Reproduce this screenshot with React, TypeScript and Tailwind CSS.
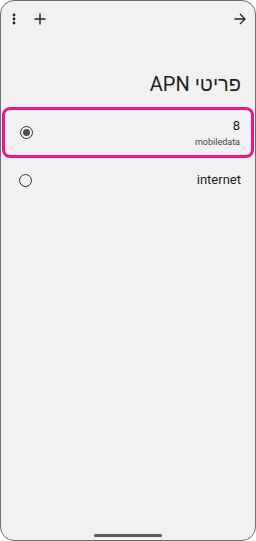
import React from "react";

const Radio = ({ checked }: { checked?: boolean }) => (
  <span className="flex h-[13px] w-[13px] items-center justify-center rounded-full border-[1.5px] border-[#303030]">
    {checked && <span className="h-[7px] w-[7px] rounded-full bg-[#505050]" />}
  </span>
);

export default function App() {
  return (
    <div className="h-[541px] w-[256px] bg-white font-['Roboto',sans-serif]">
      <div className="relative flex h-full w-full flex-col overflow-hidden rounded-[14px] border border-[#6b6f73] bg-[#f1f1f1]">
        {/* top bar */}
        <div className="flex h-[34px] items-center justify-between pl-[8px] pr-[9px] pt-[1px]">
          <div className="flex items-center gap-[15px]">
            <svg width="10" height="14" viewBox="0 0 10 14" className="text-[#222]">
              <circle cx="5" cy="3" r="1.4" fill="currentColor" />
              <circle cx="5" cy="7" r="1.4" fill="currentColor" />
              <circle cx="5" cy="11" r="1.4" fill="currentColor" />
            </svg>
            <svg width="12" height="12" viewBox="0 0 12 12" className="text-[#222]">
              <path d="M6 0.5v11M0.5 6h11" stroke="currentColor" strokeWidth="1.4" fill="none" />
            </svg>
          </div>
          <svg width="12" height="12" viewBox="0 0 12 12" className="text-[#222]">
            <path d="M0.5 6h10.5M6 1l5 5-5 5" stroke="currentColor" strokeWidth="1.3" fill="none" />
          </svg>
        </div>

        {/* title */}
        <div className="flex justify-end pr-[14px] pt-[37px]">
          <h1 dir="rtl" className="text-[20px] leading-[24px] text-[#1f1f1f]">פריטי APN</h1>
        </div>

        {/* list */}
        <div className="mt-[11px] flex flex-col">
          <div className="mx-[1px] flex h-[51px] items-center justify-between rounded-[8px] border-[3px] border-[#ec178c] pl-[15px] pr-[11px]">
            <Radio checked />
            <div className="flex flex-col items-end">
              <span className="text-[13px] leading-[18px] text-[#1f1f1f]">8</span>
              <span className="text-[9px] leading-[14px] text-[#444]">mobiledata</span>
            </div>
          </div>
          <div className="flex h-[44px] items-center justify-between pl-[18px] pr-[14px]">
            <Radio />
            <span className="text-[13px] leading-[18px] text-[#1f1f1f]">internet</span>
          </div>
        </div>

        <div className="flex-1" />
        <div className="flex justify-center pb-[3px]">
          <span className="h-[3px] w-[68px] rounded-full bg-[#5a5a5a]" />
        </div>
      </div>
    </div>
  );
}
